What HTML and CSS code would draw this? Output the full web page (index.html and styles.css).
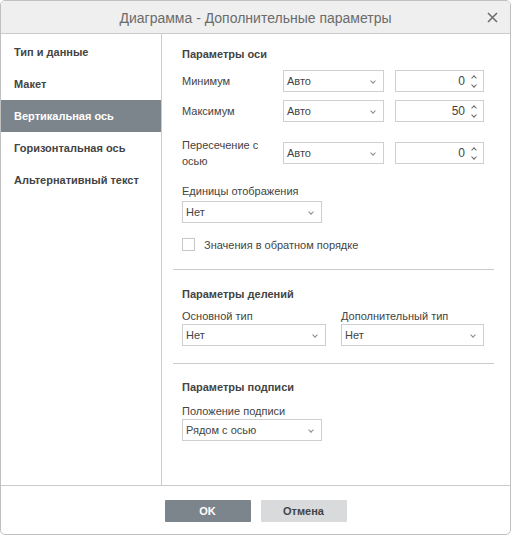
FILE: index.html
```html
<!DOCTYPE html>
<html lang="ru">
<head>
<meta charset="utf-8">
<title>Диаграмма - Дополнительные параметры</title>
<link rel="stylesheet" href="styles.css">
</head>
<body>
<div class="dialog">
  <div class="header">
    <span class="title">Диаграмма - Дополнительные параметры</span>
    <svg class="close" width="11" height="11" viewBox="0 0 11 11"><path d="M1 1L10 10M10 1L1 10" stroke="#6f6f6f" stroke-width="1.6" fill="none"/></svg>
  </div>
  <div class="body">
    <div class="sidebar">
      <div class="nav-item">Тип и данные</div>
      <div class="nav-item">Макет</div>
      <div class="nav-item active">Вертикальная ось</div>
      <div class="nav-item">Горизонтальная ось</div>
      <div class="nav-item">Альтернативный текст</div>
    </div>
    <div class="content">
      <div class="section s1">
        <div class="sec-title">Параметры оси</div>
        <div class="axis-row r1">
          <div class="row-label">Минимум</div>
          <div class="select w100"><span>Авто</span><i class="chev"></i></div>
          <div class="spin"><span>0</span><i class="arrows"><b class="up"></b><b class="down"></b></i></div>
        </div>
        <div class="axis-row r2">
          <div class="row-label">Максимум</div>
          <div class="select w100"><span>Авто</span><i class="chev"></i></div>
          <div class="spin"><span>50</span><i class="arrows"><b class="up"></b><b class="down"></b></i></div>
        </div>
        <div class="axis-row r3">
          <div class="row-label two">Пересечение с<br>осью</div>
          <div class="select w100"><span>Авто</span><i class="chev"></i></div>
          <div class="spin"><span>0</span><i class="arrows"><b class="up"></b><b class="down"></b></i></div>
        </div>
        <div class="field-label units">Единицы отображения</div>
        <div class="select w139"><span>Нет</span><i class="chev"></i></div>
        <div class="check-row">
          <span class="checkbox"></span>
          <span class="check-text">Значения в обратном порядке</span>
        </div>
      </div>
      <div class="section s2">
        <div class="sec-title">Параметры делений</div>
        <div class="two-col">
          <div class="col">
            <div class="field-label">Основной тип</div>
            <div class="select w143"><span>Нет</span><i class="chev"></i></div>
          </div>
          <div class="col">
            <div class="field-label">Дополнительный тип</div>
            <div class="select w142"><span>Нет</span><i class="chev"></i></div>
          </div>
        </div>
      </div>
      <div class="section s3">
        <div class="sec-title">Параметры подписи</div>
        <div class="field-label">Положение подписи</div>
        <div class="select w139"><span>Рядом с осью</span><i class="chev"></i></div>
      </div>
    </div>
  </div>
  <div class="footer">
    <button class="btn primary">OK</button>
    <button class="btn secondary">Отмена</button>
  </div>
</div>
</body>
</html>
```
FILE: styles.css
```css
* { box-sizing: border-box; }
html, body { margin: 0; padding: 0; background: #ffffff; }
body {
  font-family: "Liberation Sans", Arial, sans-serif;
  font-size: 11px;
  color: #444444;
}
.dialog {
  width: 511px;
  height: 535px;
  border: 1px solid #c0c0c0;
  border-radius: 5px;
  display: flex;
  flex-direction: column;
  overflow: hidden;
  background: #fff;
}
.header {
  height: 33px;
  flex: none;
  background: #efefef;
  border-bottom: 1px solid #cbcbcb;
  display: flex;
  align-items: center;
  justify-content: center;
  position: relative;
}
.title {
  font-size: 14px;
  color: #6b6b6b;
  margin-top: 1px;
}
.close {
  position: absolute;
  right: 12px;
  top: 11px;
}
.body {
  flex: 1;
  display: flex;
  min-height: 0;
}
.sidebar {
  width: 161px;
  flex: none;
  border-right: 1px solid #cbcbcb;
  padding-top: 2px;
}
.nav-item {
  height: 32px;
  line-height: 32px;
  padding-left: 13px;
  font-weight: bold;
  color: #444;
}
.nav-item.active {
  background: #7d858c;
  color: #ffffff;
}
.content {
  flex: 1;
  padding: 0 16px 0 11px;
}
.section {
  padding: 0 10px 0 9px;
}
.section.s1 { padding-top: 13px; border-bottom: 1px solid #cbcbcb; height: 236px; }
.section.s2 { padding-top: 17px; border-bottom: 1px solid #cbcbcb; height: 94px; }
.section.s3 { padding-top: 16px; }
.sec-title {
  font-weight: bold;
  line-height: 14px;
  height: 14px;
}
.axis-row {
  display: flex;
  align-items: center;
}
.axis-row.r1 { margin-top: 9px; }
.axis-row.r2 { margin-top: 8px; }
.axis-row.r3 { margin-top: 15px; }
.row-label {
  width: 101px;
  line-height: 16px;
}
.select {
  height: 22px;
  border: 1px solid #cfcfcf;
  display: flex;
  align-items: center;
  padding-left: 3px;
  position: relative;
  background: #fff;
}
.w100 { width: 101px; }
.w139 { width: 140px; }
.w143 { width: 144px; }
.w142 { width: 143px; }
.chev {
  position: absolute;
  right: 8px;
  top: 8px;
  width: 4px;
  height: 4px;
  border-right: 1px solid #8a8a8a;
  border-bottom: 1px solid #8a8a8a;
  transform: rotate(45deg);
}
.spin {
  margin-left: 11px;
  width: 89px;
  height: 22px;
  border: 1px solid #cfcfcf;
  display: flex;
  align-items: center;
  justify-content: flex-end;
  padding-right: 18px;
  position: relative;
  font-size: 12px;
}
.arrows {
  position: absolute;
  right: 5px;
  top: 2px;
  width: 8px;
  height: 16px;
}
.arrows b {
  position: absolute;
  left: 2px;
  width: 4px;
  height: 4px;
  border-color: #666;
  border-style: solid;
  border-width: 0;
  transform: rotate(45deg);
}
.arrows .up { top: 3px; border-left-width: 1px; border-top-width: 1px; }
.arrows .down { top: 10px; border-right-width: 1px; border-bottom-width: 1px; }
.field-label {
  line-height: 14px;
  height: 14px;
  margin-bottom: 1px;
}
.field-label.units { margin-top: 15px; margin-bottom: 3px; }
.check-row {
  display: flex;
  align-items: center;
  margin-top: 15px;
}
.checkbox {
  width: 13px;
  height: 13px;
  border: 1px solid #c8c8c8;
  background: #fff;
}
.check-text { margin-left: 9px; }
.two-col {
  display: flex;
  gap: 15px;
  margin-top: 8px;
}
.s3 .field-label { margin-top: 10px; }
.footer {
  height: 49px;
  flex: none;
  border-top: 1px solid #cbcbcb;
  display: flex;
  justify-content: center;
  align-items: flex-start;
  padding-top: 14px;
  gap: 10px;
}
.btn {
  width: 86px;
  height: 22px;
  border: none;
  border-radius: 1px;
  font-family: "Liberation Sans", Arial, sans-serif;
  font-size: 11px;
  font-weight: bold;
  padding: 0;
}
.btn.primary { background: #7d858c; color: #fff; }
.btn.secondary { background: #d8dadc; color: #444; }
```
